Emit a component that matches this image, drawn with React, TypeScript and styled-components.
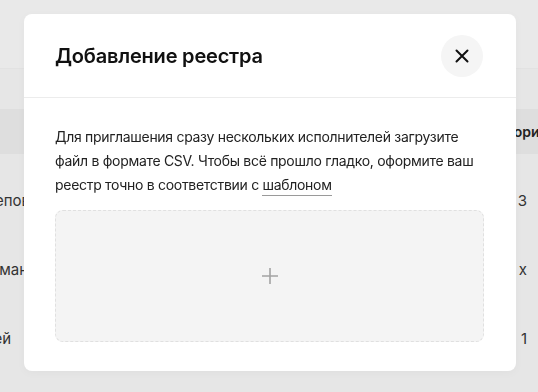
import styled, { createGlobalStyle } from 'styled-components';

const GlobalStyle = createGlobalStyle`
  html, body {
    margin:0;
    padding:0;
    background:#e6e6e6;
    font-family:Inter, "Noto Sans", "Liberation Sans", sans-serif;
    -webkit-font-smoothing:antialiased;
  }
`

const Page = styled.div`
  width:538px;
  height:392px;
  overflow:hidden;
  display:flex;
  flex-direction:column;
  background:#e6e6e6;
`

const TopBar = styled.div`
  height:68px;
  background:#e9e9e9;
  border-bottom:1px solid #e2e2e2;
`

const SubBar = styled.div`
  height:40px;
`

const TableHead = styled.div`
  height:45px;
  background:#dedede;
  display:grid;
  grid-template-columns:489px 1fr;
  align-items:center;
  font-size:14px;
  font-weight:600;
  color:#222;
  white-space:nowrap;
`

const TableRow = styled.div`
  height:69px;
  display:grid;
  grid-template-columns:40px 1fr 11px;
  align-items:center;
  font-size:15px;
  color:#333;
  white-space:nowrap;
  overflow:hidden;
`

const LeftCell = styled.div`
  justify-self:end;
  margin-top:24px;
  margin-right:${p => p.$hidden}px;
`

const RightCell = styled.div`
  grid-column:2;
  justify-self:end;
  margin-top:24px;
`

const Modal = styled.div`
  position:fixed;
  top:14px;
  left:24px;
  width:492px;
  height:357px;
  background:#fff;
  border-radius:8px;
  display:flex;
  flex-direction:column;
  box-shadow:0 2px 10px rgba(0,0,0,0.03);
`

const ModalHeader = styled.div`
  height:83px;
  display:flex;
  align-items:center;
  justify-content:space-between;
  padding:0 33px 0 31px;
  border-bottom:1px solid #ececec;
  flex-shrink:0;
`

const Title = styled.h2`
  margin:0;
  font-size:20px;
  font-weight:600;
  color:#111;
  letter-spacing:-0.2px;
`

const CloseButton = styled.button`
  width:42px;
  height:42px;
  border-radius:50%;
  border:none;
  background:#f5f5f5;
  display:flex;
  align-items:center;
  justify-content:center;
  padding:0;
  cursor:pointer;
`

const ModalBody = styled.div`
  padding:27px 32px 29px 31px;
  display:flex;
  flex-direction:column;
  gap:13px;
  flex:1;
`

const Text = styled.p`
  margin:0;
  font-size:14px;
  line-height:24px;
  color:#222;
  letter-spacing:-0.3px;
`

const TemplateLink = styled.a`
  color:#222;
  text-decoration:none;
  border-bottom:1px solid #9a9a9a;
  padding-bottom:2px;
`

const DropZone = styled.div`
  flex:1;
  border:1px dashed #e0e0e0;
  border-radius:8px;
  background:#f4f4f4;
  display:flex;
  align-items:center;
  justify-content:center;
`

export default function App() {
  return (
    <Page>
      <GlobalStyle />
      <TopBar />
      <SubBar />
      <TableHead>
        <span />
        <span>Авторизация</span>
      </TableHead>
      <TableRow>
        <LeftCell $hidden={10}>Иван Черепов</LeftCell>
        <RightCell>3</RightCell>
      </TableRow>
      <TableRow>
        <LeftCell $hidden={12}>Анна Бекман</LeftCell>
        <RightCell>х</RightCell>
      </TableRow>
      <TableRow>
        <LeftCell $hidden={29}>Сергей</LeftCell>
        <RightCell>1</RightCell>
      </TableRow>

      <Modal>
        <ModalHeader>
          <Title>Добавление реестра</Title>
          <CloseButton aria-label="Закрыть">
            <svg width="14" height="14" viewBox="0 0 14 14" fill="none">
              <path d="M1.5 1.5L12.5 12.5M12.5 1.5L1.5 12.5" stroke="#111" strokeWidth="2" strokeLinecap="round" />
            </svg>
          </CloseButton>
        </ModalHeader>
        <ModalBody>
          <Text>
            Для приглашения сразу нескольких исполнителей загрузите файл в формате CSV. Чтобы всё прошло гладко, оформите ваш реестр точно в соответствии с <TemplateLink href="#">шаблоном</TemplateLink>
          </Text>
          <DropZone>
            <svg width="18" height="18" viewBox="0 0 18 18" fill="none">
              <path d="M9 1V17M1 9H17" stroke="#a3a3a3" strokeWidth="1.6" />
            </svg>
          </DropZone>
        </ModalBody>
      </Modal>
    </Page>
  );
}
